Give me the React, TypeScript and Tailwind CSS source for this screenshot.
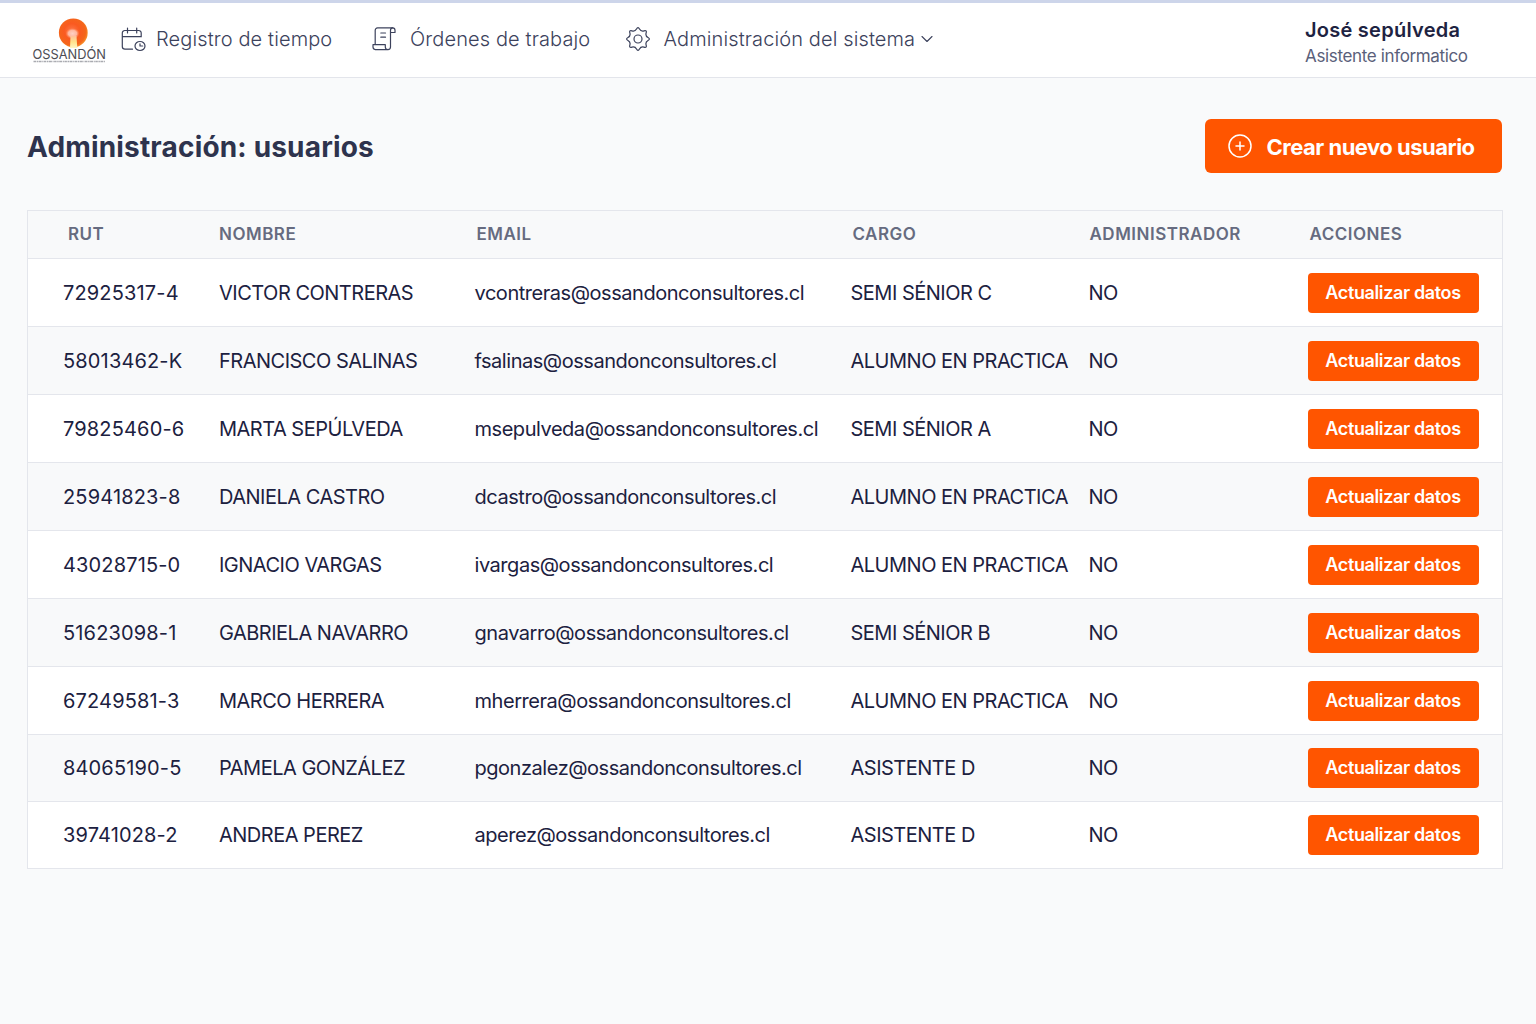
import { ChevronDown } from "lucide-react";
import type { ReactNode } from "react";

type User = {
  rut: string;
  nombre: string;
  email: string;
  cargo: string;
  administrador: boolean;
};

const users: User[] = [
  { rut: "72925317-4", nombre: "VICTOR CONTRERAS", email: "vcontreras@ossandonconsultores.cl", cargo: "SEMI SÉNIOR C", administrador: false },
  { rut: "58013462-K", nombre: "FRANCISCO SALINAS", email: "fsalinas@ossandonconsultores.cl", cargo: "ALUMNO EN PRACTICA", administrador: false },
  { rut: "79825460-6", nombre: "MARTA SEPÚLVEDA", email: "msepulveda@ossandonconsultores.cl", cargo: "SEMI SÉNIOR A", administrador: false },
  { rut: "25941823-8", nombre: "DANIELA CASTRO", email: "dcastro@ossandonconsultores.cl", cargo: "ALUMNO EN PRACTICA", administrador: false },
  { rut: "43028715-0", nombre: "IGNACIO VARGAS", email: "ivargas@ossandonconsultores.cl", cargo: "ALUMNO EN PRACTICA", administrador: false },
  { rut: "51623098-1", nombre: "GABRIELA NAVARRO", email: "gnavarro@ossandonconsultores.cl", cargo: "SEMI SÉNIOR B", administrador: false },
  { rut: "67249581-3", nombre: "MARCO HERRERA", email: "mherrera@ossandonconsultores.cl", cargo: "ALUMNO EN PRACTICA", administrador: false },
  { rut: "84065190-5", nombre: "PAMELA GONZÁLEZ", email: "pgonzalez@ossandonconsultores.cl", cargo: "ASISTENTE D", administrador: false },
  { rut: "39741028-2", nombre: "ANDREA PEREZ", email: "aperez@ossandonconsultores.cl", cargo: "ASISTENTE D", administrador: false },
];

const columns = "grid grid-cols-[156px_255.5px_376px_238px_220px_1fr] items-center";

// Eight soft teeth: quadratic curves between the midpoints of an outer and an inner ring
const gearPoints = Array.from({ length: 16 }, (_, i) => {
  const r = i % 2 === 0 ? 12.8 : 7.8;
  const a = (i * Math.PI) / 8;
  return [12 + r * Math.sin(a), 12 - r * Math.cos(a)];
});

const gearPath = gearPoints
  .map(([x, y], i) => {
    const [nx, ny] = gearPoints[(i + 1) % 16];
    const [px, py] = gearPoints[(i + 15) % 16];
    const start = i === 0 ? `M${(px + x) / 2} ${(py + y) / 2}` : "";
    return `${start}Q${x} ${y} ${(x + nx) / 2} ${(y + ny) / 2}`;
  })
  .join("");

function Logo() {
  return (
    <svg width="78" height="48" viewBox="0 0 78 48" className="shrink-0">
      <defs>
        <radialGradient id="sun" cx="45%" cy="45%" r="60%">
          <stop offset="0%" stopColor="#ff7a4a" />
          <stop offset="45%" stopColor="#fa5a20" />
          <stop offset="80%" stopColor="#f4661a" />
          <stop offset="100%" stopColor="#f9a030" />
        </radialGradient>
        <radialGradient id="glow">
          <stop offset="0%" stopColor="#ffd0c4" />
          <stop offset="60%" stopColor="#ffb79f" />
          <stop offset="100%" stopColor="#ff8a5a" stopOpacity="0" />
        </radialGradient>
        <linearGradient id="beam" x1="0" y1="0" x2="0" y2="1">
          <stop offset="0%" stopColor="#ffc09a" />
          <stop offset="50%" stopColor="#ffe48c" />
          <stop offset="100%" stopColor="#fff6c4" />
        </linearGradient>
      </defs>
      <circle cx="41.300" cy="16.800" r="14.400" fill="url(#sun)" />
      <ellipse cx="40.500" cy="17.500" rx="7" ry="5.500" fill="url(#glow)" />
      <path d="M38.500 20h6l.800 12h-7.300z" fill="url(#beam)" />
      <text x="0.500" y="42.500" textLength="73.500" lengthAdjust="spacingAndGlyphs" fontSize="13.500" fontWeight="400" fill="#4c4d54" fontFamily="Inter, sans-serif">
        OSSANDÓN
      </text>
      <path d="M1.500 45.500h71.500" stroke="#a9aab0" strokeWidth="1.400" strokeDasharray="2.500 .6 1.500 .5 3 .7 1 .5" />
    </svg>
  );
}

function CalendarClockIcon() {
  return (
    <svg width="26" height="26" viewBox="0 0 26 26" fill="none" stroke="currentColor" strokeWidth="1.200" strokeLinecap="round">
      <path d="M11.500 23.200H4a2.700 2.700 0 0 1-2.700-2.700V7A2.500 2.500 0 0 1 3.800 4.500h13.900A2.500 2.500 0 0 1 20.200 7v3.700H1.300M6.500 2v5M15.700 2v5" />
      <ellipse cx="19" cy="20" rx="5" ry="4.500" />
      <path d="M19 17.800V20h2.700" />
    </svg>
  );
}

function ScrollIcon() {
  return (
    <svg width="24" height="24" viewBox="0 0 24 24" fill="none" stroke="currentColor" strokeWidth="1.200" strokeLinecap="round" strokeLinejoin="round">
      <path d="M3.200 17.500V3.200A2.300 2.300 0 0 1 5.500 .9h15.200a2.300 2.300 0 0 1 2.300 2.300v2.300h-4.500" />
      <path d="M20.700.9a2.300 2.300 0 0 0-2.200 2.300v16.900a2.500 2.500 0 0 1-2.500 2.500H3.300A2.500 2.500 0 0 1 1 20.100v-2.400h12.300v2.400a2.500 2.500 0 0 0 2.500 2.500" />
      <path d="M8.800 6h4.700M8.800 10.200h4.700" />
    </svg>
  );
}

function GearIcon() {
  return (
    <svg width="24" height="24" viewBox="0 0 24 24" fill="none" stroke="currentColor" strokeWidth="1.200" strokeLinejoin="round">
      <path d={gearPath} />
      <circle cx="12" cy="12" r="4" />
    </svg>
  );
}

function NavItem({ icon, children }: { icon: ReactNode; children: ReactNode }) {
  return (
    <a className="flex items-center text-xl font-light tracking-[0.12px] whitespace-nowrap text-[#3c425c]">
      {icon}
      {children}
    </a>
  );
}

function Header() {
  return (
    <header className="flex h-[78px] items-center border-t-[3px] border-b border-t-[#cdd5ea] border-b-[#e3e5eb] bg-white pl-8">
      <Logo />
      <nav className="flex flex-1 items-center pb-[3px] pl-[11px]">
        <div className="w-[251px]">
          <NavItem icon={<CalendarClockIcon />}>
            <span className="pl-[9px]">Registro de tiempo</span>
          </NavItem>
        </div>
        <div className="w-[253.5px]">
          <NavItem icon={<ScrollIcon />}>
            <span className="pl-[14px]">Órdenes de trabajo</span>
          </NavItem>
        </div>
        <NavItem icon={<GearIcon />}>
          <span className="pl-[14px]">Administración del sistema</span>
          <ChevronDown size={20} strokeWidth={1.3} className="ml-0.5" />
        </NavItem>
      </nav>
      <div className="w-[231px] pt-1.5 whitespace-nowrap">
        <p className="text-xl leading-[26px] font-semibold tracking-[0.25px] text-[#1e2342]">José sepúlveda</p>
        <p className="text-[17px] leading-[26px] tracking-[-0.35px] text-[#5a607a]">Asistente informatico</p>
      </div>
    </header>
  );
}

function UserRow({ user }: { user: User }) {
  return (
    <div className={`${columns} h-[68px] border-b border-[#e4e6ec] pl-[35px] text-xl tracking-[-0.5px] whitespace-nowrap text-[#1c2140] odd:bg-[#f8f9fa] even:bg-white nth-last-[-n+2]:h-[67px]`}>
      <span className="tracking-[0.15px]">{user.rut}</span>
      <span>{user.nombre}</span>
      <span className="tracking-[-0.46px]">{user.email}</span>
      <span>{user.cargo}</span>
      <span>{user.administrador ? "SI" : "NO"}</span>
      <button className="-ml-px h-10 w-[171px] rounded bg-[#ff5500] text-lg font-semibold tracking-[-0.37px] text-white">Actualizar datos</button>
    </div>
  );
}

export default function App() {
  return (
    <div className="min-h-screen bg-[#f9fafb] font-[Inter,sans-serif]">
      <Header />
      <main className="pr-[33px] pl-[27px] pt-[41px]">
        <div className="flex items-center justify-between pr-[1.5px]">
          <h1 className="pt-px text-[28px] font-bold tracking-[0.17px] text-[#2e334d]">Administración: usuarios</h1>
          <button className="flex h-[54px] w-[297px] items-center rounded-md bg-[#ff5500] pl-[23px] text-[22px] font-bold tracking-[-0.5px] text-white">
            <svg width="24" height="24" viewBox="0 0 24 24" fill="none" stroke="currentColor" strokeWidth="1.500" strokeLinecap="round">
              <circle cx="12" cy="12" r="11" />
              <path d="M12 8v8M8 12h8" />
            </svg>
            <span className="pt-0.5 pl-[15px] whitespace-nowrap">Crear nuevo usuario</span>
          </button>
        </div>
        <section className="mt-[37px] border border-b-0 border-[#e4e6ec]">
          <div className={`${columns} h-12 border-b border-[#e4e6ec] bg-[#f8f9fa] pl-[35px] text-[17px] font-semibold tracking-[0.5px] text-[#666b80]`}>
            <span className="pl-[5px]">RUT</span>
            <span>NOMBRE</span>
            <span className="pl-0.5">EMAIL</span>
            <span className="pl-0.5">CARGO</span>
            <span className="pl-px">ADMINISTRADOR</span>
            <span className="pl-px">ACCIONES</span>
          </div>
          {users.map((user) => (
            <UserRow key={user.rut} user={user} />
          ))}
        </section>
      </main>
    </div>
  );
}
